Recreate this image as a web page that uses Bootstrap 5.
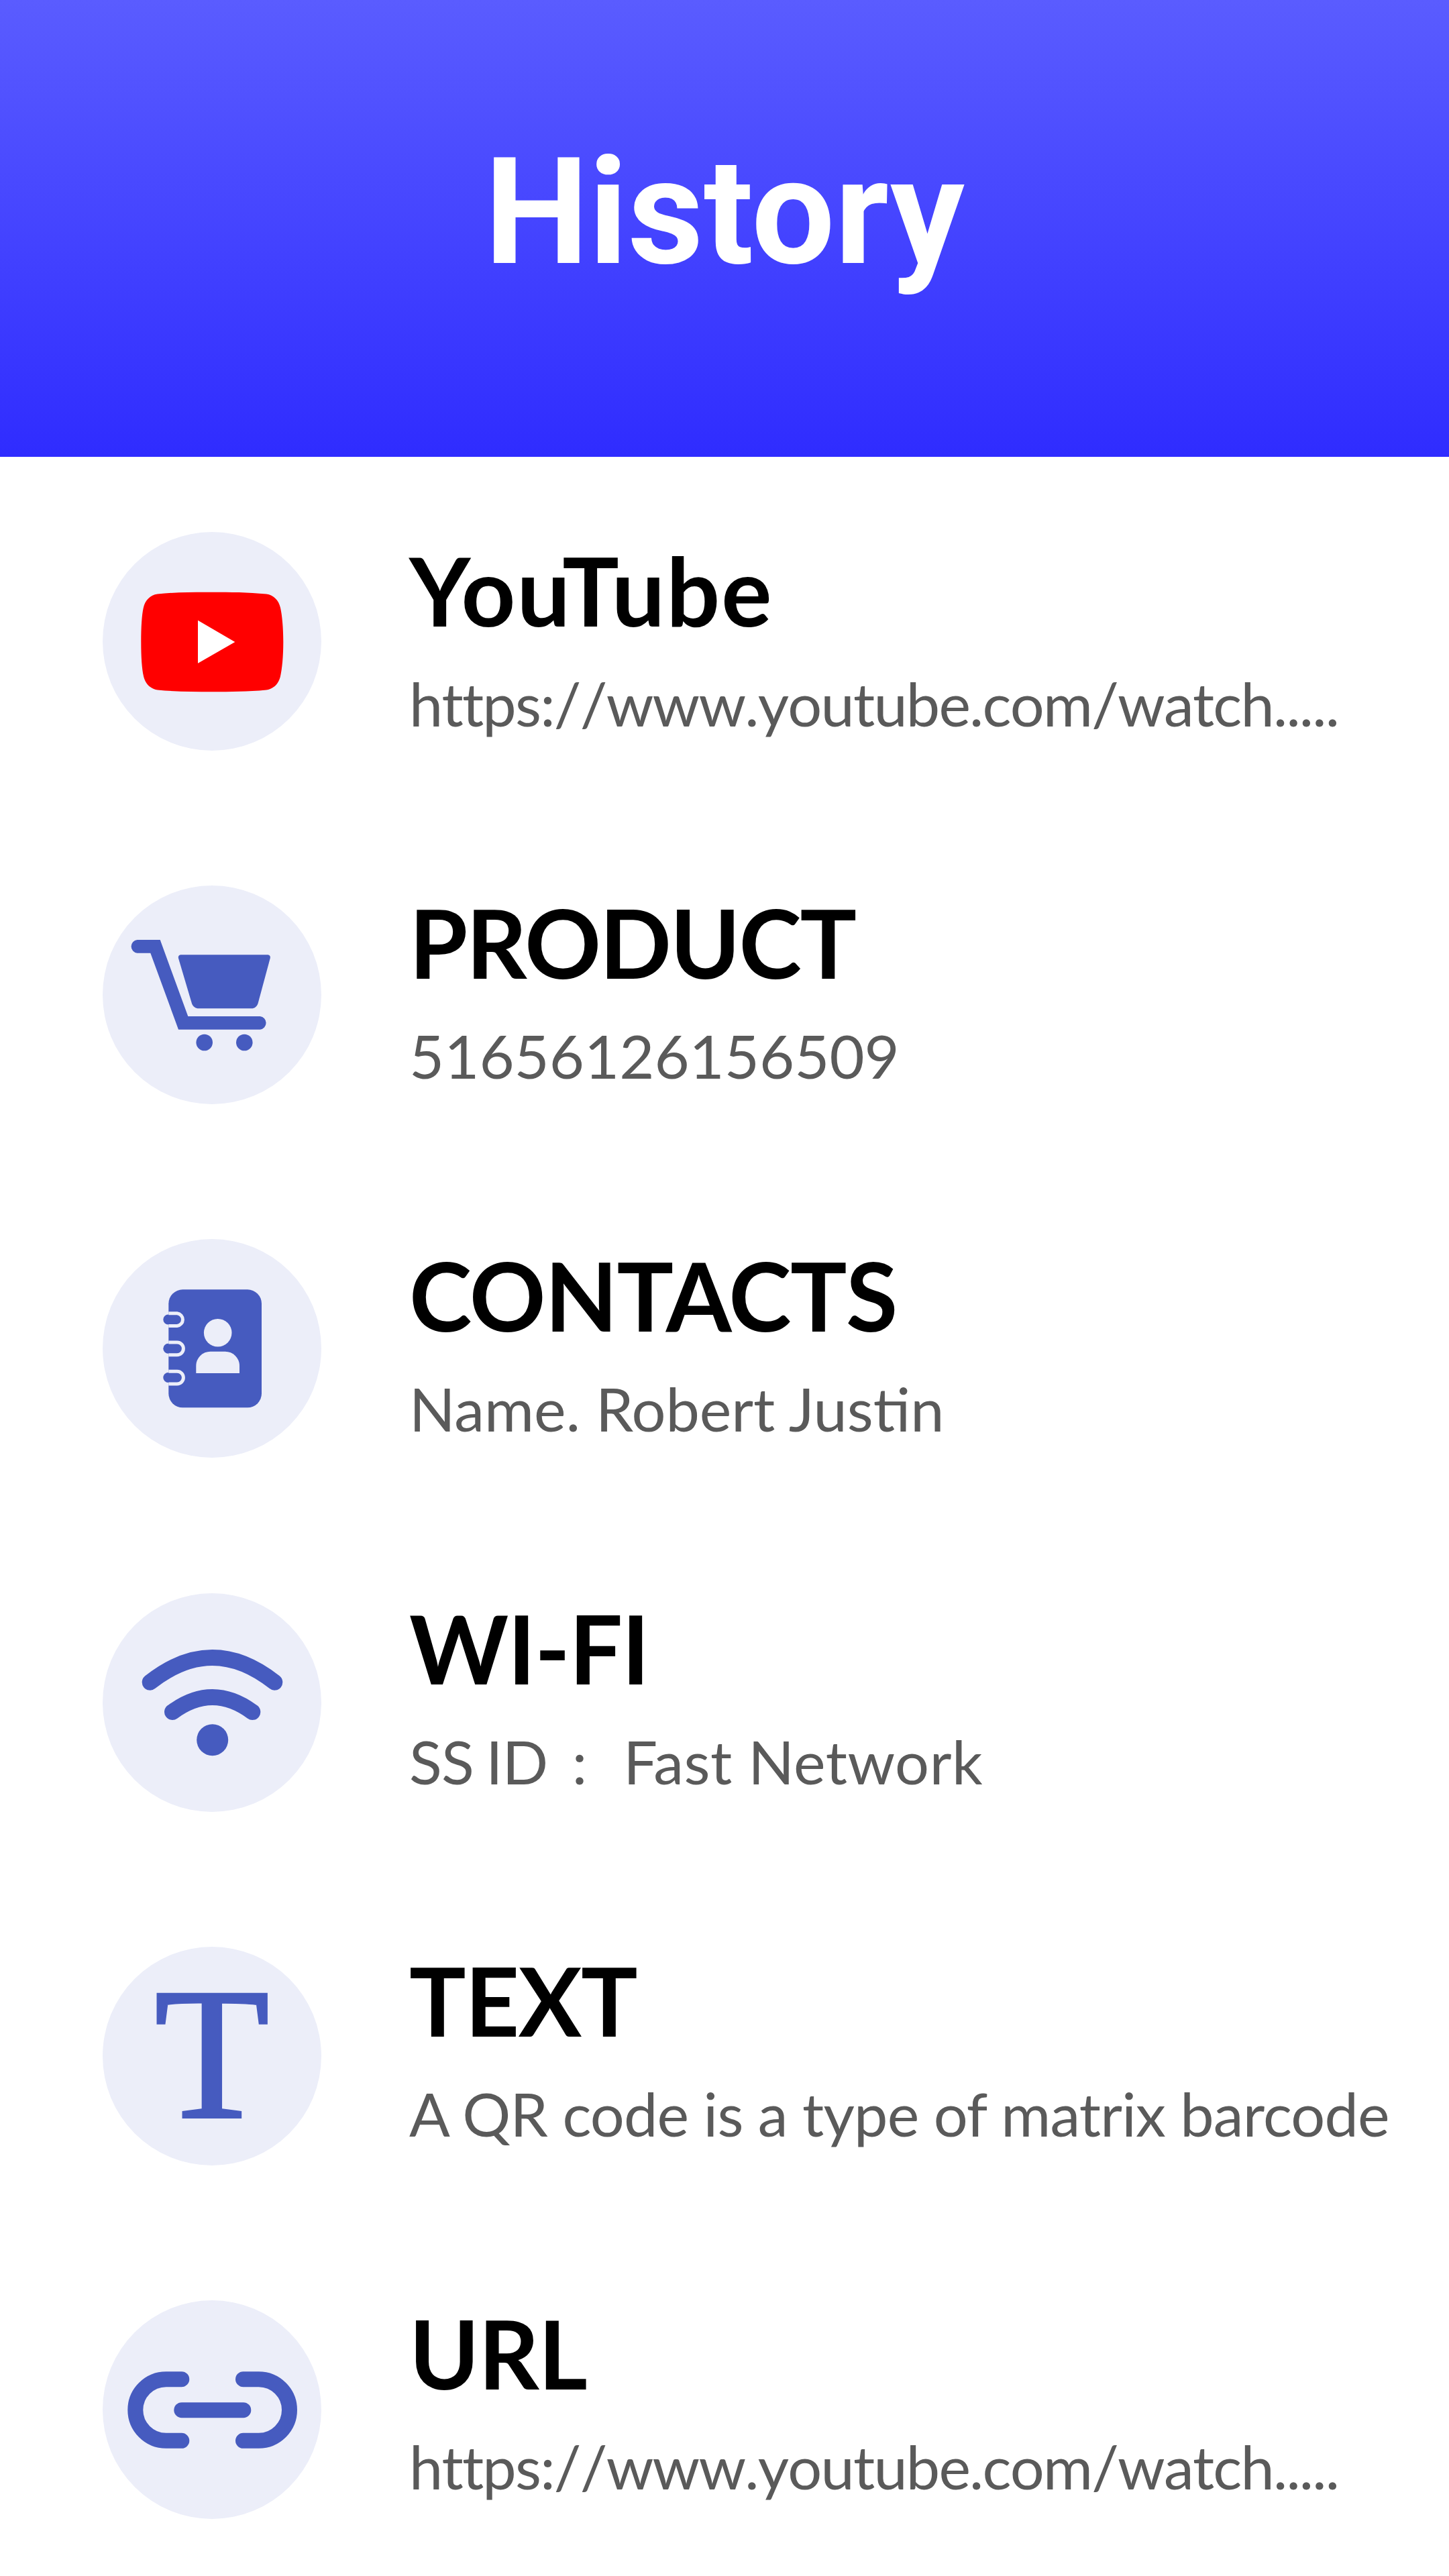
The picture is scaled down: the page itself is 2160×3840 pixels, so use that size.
<!DOCTYPE html>
<html lang="en">
<head>
    <meta charset="UTF-8">
    <meta name="viewport" content="width=device-width, initial-scale=1.0">
    <title>History</title>
    <link href="https://cdn.jsdelivr.net/npm/bootstrap@5.3.0/dist/css/bootstrap.min.css" rel="stylesheet">
    <style>
        body { background: #fff; }
        .hist-header { height: 681px; padding-bottom: 48px; background: linear-gradient(180deg, #5a5cff 0%, #2f2cff 100%); }
        .hist-title { font-family: Roboto, sans-serif; font-weight: 700; font-size: 220px; line-height: 1; margin: 0; }
        .hist-list { padding: 112px 0 0 153px; gap: 201.2px; }
        .hist-circle { width: 326px; height: 326px; background: #eceef9; flex: none; }
        .hist-circle svg { width: 326px; height: 326px; display: block; }
        .hist-t { font-family: "Liberation Serif", serif; font-size: 280px; line-height: 1; color: #465bbf; padding-bottom: 6px; -webkit-text-stroke: 4px #465bbf; }
        .hist-body { margin: 0 0 16px 131px; font-family: Lato, sans-serif; white-space: nowrap; }
        /* text drifts up slightly against the circles, row by row */
        .hist-row:nth-child(2) .hist-body { margin-top: -3px; }
        .hist-row:nth-child(3) .hist-body { margin-top: -6px; }
        .hist-row:nth-child(4) .hist-body { margin-top: -9px; }
        .hist-row:nth-child(5) .hist-body { margin-top: -12px; }
        .hist-row:nth-child(6) .hist-body { margin-top: -15px; }
        .hist-name { font-weight: 700; font-size: 141px; line-height: 170px; color: #000; letter-spacing: -1.4px; }
        .hist-name-loose { letter-spacing: 2px; }
        .hist-name-tight { letter-spacing: -2.2px; }
        .hist-sub { font-size: 90px; line-height: 108px; color: #5a5a5a; margin-top: 29px; white-space: pre; }
        .hist-sub-tight { letter-spacing: -.8px; }
        .hist-sub-url { font-kerning: none; letter-spacing: -1.8px; }
        .hist-sub-wifi { letter-spacing: -.8px; word-spacing: -4px; }
        .hist-sub-wifi span { letter-spacing: .5px; word-spacing: 0; }
    </style>
</head>
<body>
    <header class="hist-header d-flex align-items-center justify-content-center">
        <h1 class="hist-title text-white">History</h1>
    </header>

    <div class="hist-list d-flex flex-column">
        <!-- YouTube -->
        <div class="hist-row d-flex align-items-center">
            <div class="hist-circle rounded-circle">
                <svg viewBox="0 0 326 326">
                    <path fill="#f00" d="M57.3 164c0-22 1-40 3.500-51 2.500-11 10-19 21-20.500C110 89.500 135 89.700 163 89.700s53 0 81 2.800c11 1.500 18.500 9.500 21 20.500 2.500 11 4.300 29 4.300 51s-1.800 40-4.300 51c-2.500 11-10 19-21 20.500-28 2.700-53 2.700-81 2.700s-53 0-81-2.700c-11-1.500-18.500-9.500-21-20.500-2.500-11-3.700-29-3.700-51z"/>
                    <path fill="#fff" d="M142 131.700 197.300 164 142 195.700z"/>
                </svg>
            </div>
            <div class="hist-body">
                <div class="hist-name hist-name-loose">YouTube</div>
                <div class="hist-sub hist-sub-url">https://www.youtube.com/watch.....</div>
            </div>
        </div>

        <!-- Product -->
        <div class="hist-row d-flex align-items-center">
            <div class="hist-circle rounded-circle">
                <svg viewBox="0 0 326 326" fill="#465bbf">
                    <path d="M51.500 81H85.700L127.300 195H234.700A9.900 9.900 0 0 1 234.700 214.700H113L71.300 100.700H51.500A9.900 9.900 0 0 1 51.500 81z"/>
                    <path d="M117 103.300H245.700C248.700 103.300 250.500 105.500 249.700 108.500L231.500 176C230 180.500 226.500 183.300 222 183.300H143C138.500 183.300 134.500 180.500 133 176L113 108.500C112.200 105.500 114 103.300 117 103.300z"/>
                    <circle cx="151.700" cy="234" r="12.300"/>
                    <circle cx="211.300" cy="234" r="12.300"/>
                </svg>
            </div>
            <div class="hist-body">
                <div class="hist-name hist-name-tight">PRODUCT</div>
                <div class="hist-sub">51656126156509</div>
            </div>
        </div>

        <!-- Contacts -->
        <div class="hist-row d-flex align-items-center">
            <div class="hist-circle rounded-circle">
                <svg viewBox="0 0 326 326">
                    <rect x="98.300" y="75.300" width="138.700" height="176" rx="21" fill="#465bbf"/>
                    <g fill="#465bbf" stroke="#eceef9" stroke-width="5">
                        <rect x="90.300" y="112.500" width="28" height="15" rx="7.500" stroke="none"/>
                        <rect x="90.300" y="155.700" width="28" height="15" rx="7.500" stroke="none"/>
                        <rect x="90.300" y="199" width="28" height="15" rx="7.500" stroke="none"/>
                        <path fill="none" d="M98.300 110.800H111A9.400 9.400 0 0 1 111 129.500H98.300M98.300 153.900H111A9.400 9.400 0 0 1 111 172.700H98.300M98.300 197.200H111A9.400 9.400 0 0 1 111 216H98.300"/>
                    </g>
                    <circle cx="171.700" cy="139.700" r="20.800" fill="#eceef9"/>
                    <path fill="#eceef9" d="M139.300 200V189A21.300 21.300 0 0 1 160.600 167.700H182.700A21.300 21.300 0 0 1 204 189V200z"/>
                </svg>
            </div>
            <div class="hist-body">
                <div class="hist-name">CONTACTS</div>
                <div class="hist-sub">Name. Robert Justin</div>
            </div>
        </div>

        <!-- Wi-Fi -->
        <div class="hist-row d-flex align-items-center">
            <div class="hist-circle rounded-circle">
                <svg viewBox="0 0 326 326">
                    <g fill="none" stroke="#465bbf" stroke-width="24" stroke-linecap="round">
                        <path d="M70.700 132.700Q163.500 59.300 256.300 132.700"/>
                        <path d="M104 177Q163.700 133 223.300 177"/>
                    </g>
                    <circle cx="163.700" cy="218.700" r="23.500" fill="#465bbf"/>
                </svg>
            </div>
            <div class="hist-body">
                <div class="hist-name">WI-FI</div>
                <div class="hist-sub hist-sub-wifi">SS ID  :   <span>Fast Network</span></div>
            </div>
        </div>

        <!-- Text -->
        <div class="hist-row d-flex align-items-center">
            <div class="hist-circle rounded-circle d-flex align-items-center justify-content-center">
                <span class="hist-t">T</span>
            </div>
            <div class="hist-body">
                <div class="hist-name">TEXT</div>
                <div class="hist-sub hist-sub-tight">A QR code is a type of matrix barcode</div>
            </div>
        </div>

        <!-- URL -->
        <div class="hist-row d-flex align-items-center">
            <div class="hist-circle rounded-circle">
                <svg viewBox="0 0 326 326">
                    <g fill="none" stroke="#465bbf" stroke-width="23" stroke-linecap="round">
                        <path d="M117.800 117.700H94.600A45.800 45.800 0 0 0 94.600 209.300H117.800"/>
                        <path d="M209.500 117.700H232.700A45.800 45.800 0 0 1 232.700 209.300H209.500"/>
                        <path d="M117.800 163.700H209.800"/>
                    </g>
                </svg>
            </div>
            <div class="hist-body">
                <div class="hist-name">URL</div>
                <div class="hist-sub hist-sub-url">https://www.youtube.com/watch.....</div>
            </div>
        </div>
    </div>

    <script src="https://cdn.jsdelivr.net/npm/bootstrap@5.3.0/dist/js/bootstrap.bundle.min.js"></script>
</body>
</html>
